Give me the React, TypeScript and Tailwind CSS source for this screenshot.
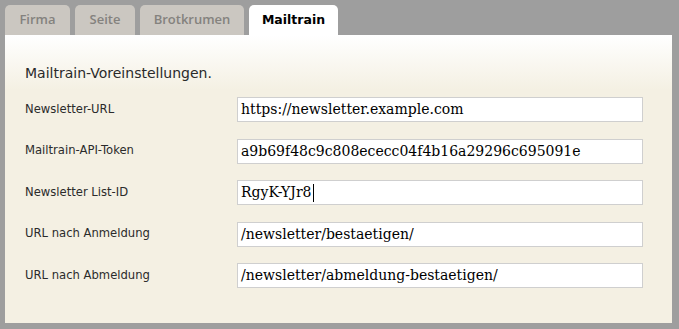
import React from "react";

const tabs = [
  { label: "Firma", w: "w-[65px]" },
  { label: "Seite", w: "w-[60px]" },
  { label: "Brotkrumen", w: "w-[104px]" },
  { label: "Mailtrain", w: "w-[89px]", active: true },
];

const fields = [
  { label: "Newsletter-URL", value: "https://newsletter.example.com" },
  { label: "Mailtrain-API-Token", value: "a9b69f48c9c808ececc04f4b16a29296c695091e" },
  { label: "Newsletter List-ID", value: "RgyK-YJr8", caret: true },
  { label: "URL nach Anmeldung", value: "/newsletter/bestaetigen/" },
  { label: "URL nach Abmeldung", value: "/newsletter/abmeldung-bestaetigen/" },
];

export default function App() {
  return (
    <div className="w-[679px] h-[329px] bg-[#9e9e9e] pt-[5px] pl-[5px] overflow-hidden font-['DejaVu_Sans',sans-serif]">
      <div className="flex h-[30px] gap-[5px]">
        {tabs.map((t) => (
          <div
            key={t.label}
            className={`${t.w} rounded-t-[5px] flex items-center justify-center ${
              t.active
                ? "bg-white text-black text-[12.5px] font-bold"
                : "bg-[#cbc7c1] text-[#84827e] text-[13px] font-semibold font-['Open_Sans',sans-serif]"
            }`}
          >
            {t.label}
          </div>
        ))}
      </div>
      <div className="w-[667px] h-[288px] bg-[linear-gradient(to_bottom,#ffffff_0px,#f4f0e3_55px)] pl-[20px] pt-[29px]">
        <p className="text-[14px] leading-[18px] text-[#2a2a2a]">Mailtrain-Voreinstellungen.</p>
        <div className="mt-[15px] flex flex-col gap-[16.5px]">
          {fields.map((f) => (
            <div key={f.label} className="flex items-center">
              <span className="w-[212px] text-[11.6px] text-[#2b2b2b]">{f.label}</span>
              <div className="w-[406px] h-[25px] bg-white border border-[#cfcfcf] pl-[3px] flex items-center font-['DejaVu_Serif',serif] text-[14px] text-black whitespace-nowrap">
                {f.value}
                {f.caret && <span className="inline-block w-px h-[18px] bg-black ml-px" />}
              </div>
            </div>
          ))}
        </div>
      </div>
    </div>
  );
}
